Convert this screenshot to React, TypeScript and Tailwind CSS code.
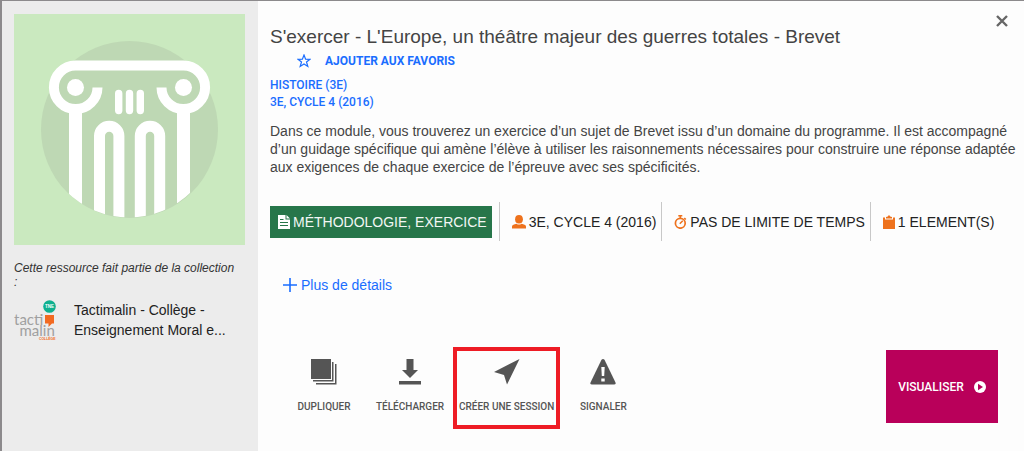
import type { ReactNode } from "react";

function PillarArt() {
  return (
    <svg viewBox="0 0 231 231" className="block w-full" role="img" aria-label="Histoire">
      <defs>
        <clipPath id="pillar-clip">
          <path d="M0 0H231V115H203.500A88.500 88.500 0 0 1 26.500 115H0Z" />
        </clipPath>
      </defs>
      <rect width="231" height="231" fill="#cae9bf" />
      <circle cx="115.500" cy="115.500" r="88.500" fill="#bed8b4" />
      <g clipPath="url(#pillar-clip)">
        <path d="M61.500 51.500H169.500A21.500 21.500 0 0 1 169.500 94.500H61.500A21.500 21.500 0 0 1 61.500 51.500Z" fill="#bed8b4" />
        <g fill="none" stroke="#fff">
          <path d="M83.500 73.500A21.800 21.800 0 1 1 61.500 51.500H169.500A21.800 21.800 0 1 1 147.500 73.500" strokeWidth="10" />
          <path d="M61.500 97V231M169.500 97V231" strokeWidth="13" />
          <path d="M85.500 231V122a9.700 9.700 0 0 1 19.400 0V231M126.300 231V122a9.700 9.700 0 0 1 19.400 0V231" strokeWidth="11" />
          <path d="M104.700 79.500V96.500M115.500 79.500V96.500M126.300 79.500V96.500" strokeWidth="7.400" strokeLinecap="round" />
        </g>
        <circle cx="61.500" cy="73.500" r="8.500" fill="#fff" />
        <circle cx="169.500" cy="73.500" r="8.500" fill="#fff" />
      </g>
    </svg>
  );
}

function CollectionLogo() {
  return (
    <svg viewBox="0 0 42 42" className="size-[42px] shrink-0" role="img" aria-label="Tactimalin Collège">
      <circle cx="35.500" cy="6.500" r="6.300" fill="#0eb08f" />
      <text x="35.500" y="8.200" textAnchor="middle" fontSize="4.500" fontWeight="700" fill="#fff" fontFamily="Liberation Sans, sans-serif">TNE</text>
      <g fill="#a0a0a0" fontFamily="Lato, sans-serif" fontSize="15" fontWeight="400">
        <text x="0" y="25">tacti</text>
        <text x="5.500" y="35.500">malin</text>
      </g>
      <path d="M31 15H40V23.500H38L34.500 27V23.500H31Z" fill="#f26a21" />
      <text x="25" y="39.500" fontSize="3.400" fontWeight="700" fill="#f26a21" fontFamily="Liberation Sans, sans-serif">COLLÈGE</text>
    </svg>
  );
}

function Fact({ icon, children }: { icon: ReactNode; children: ReactNode }) {
  return (
    <li className="flex h-[39px] items-center gap-[3px] border-l border-[#c8c8c8] pr-[5px] pl-3 text-[#222]">
      {icon}
      <span>{children}</span>
    </li>
  );
}

function Action({ icon, label, highlighted = false }: { icon: ReactNode; label: string; highlighted?: boolean }) {
  return (
    <button
      type="button"
      className={
        "flex h-[82px] min-w-[86px] flex-col items-center justify-start gap-4 border-[4px] px-[2px] pt-2 font-[Roboto,sans-serif] text-[10px] leading-3 font-medium whitespace-nowrap text-[#555] " +
        (highlighted ? "border-[#ee1c25]" : "border-transparent")
      }
    >
      {icon}
      {label}
    </button>
  );
}

export default function App() {
  return (
    <div className="flex min-h-screen border-t border-l-2 border-[#8c8a8c] bg-[#fdfdfd] font-['Liberation_Sans',Arial,sans-serif]">
      <aside className="w-64 shrink-0 bg-[#ececec] pt-[13px] pr-[13px] pl-3">
        <PillarArt />
        <p className="mt-4 pr-2 text-[12px] leading-[14px] text-[#333] italic">Cette ressource fait partie de la collection :</p>
        <a href="#collection" className="mt-[11px] flex items-start gap-[18px] text-[14px] leading-5 text-[#222]">
          <CollectionLogo />
          <span>Tactimalin - Collège - Enseignement Moral e...</span>
        </a>
      </aside>

      <main className="relative min-w-0 flex-1 pt-6 pr-1 pl-3">
        <button type="button" aria-label="Fermer" className="absolute top-[14px] right-4 text-[#666]">
          <svg viewBox="0 0 12 12" className="size-3" fill="none" stroke="currentColor" strokeWidth="2.400">
            <path d="M1 1L11 11M11 1L1 11" />
          </svg>
        </button>

        <h1 className="text-[19px] leading-6 text-[#444]">S'exercer - L'Europe, un théâtre majeur des guerres totales - Brevet</h1>
        <button type="button" className="ml-[27px] flex h-6 items-center gap-[14px] font-[Roboto,sans-serif] text-[12px] font-bold text-[#1a6dff]">
          <svg viewBox="0 0 14 14" className="size-[14px]" fill="none" stroke="currentColor" strokeWidth="1.200">
            <path d="M7 1L8.600 5.100L13 5.300L9.500 8L10.800 12.400L7 9.900L3.200 12.400L4.500 8L1 5.300L5.400 5.100Z" />
          </svg>
          AJOUTER AUX FAVORIS
        </button>
        <div className="mt-1 flex flex-col items-start font-[Roboto,sans-serif] text-[12px] leading-[17px] font-medium text-[#1a6dff]">
          <a href="#histoire">HISTOIRE (3E)</a>
          <a href="#cycle-4">3E, CYCLE 4 (2016)</a>
        </div>
        <p className="mt-[11px] text-[14px] leading-[18px] text-[#444]">
          Dans ce module, vous trouverez un exercice d’un sujet de Brevet issu d’un domaine du programme. Il est accompagné d’un guidage spécifique qui amène l’élève à utiliser les raisonnements nécessaires pour construire une réponse adaptée aux exigences de chaque exercice de l’épreuve avec ses spécificités.
        </p>

        <ul className="mt-[26px] flex items-center text-[14px] leading-5 whitespace-nowrap">
          <li className="mr-[7px] flex h-8 items-center gap-[3px] bg-[#27764a] pr-[5px] pl-2 text-[#f2f7f4]">
            <svg viewBox="0 0 12 14" className="h-[14px] w-3">
              <path d="M0 0H7.500V4.500H12V14H0ZM8.500 0L12 3.500H8.500Z" fill="#fff" />
              <path d="M2 4.500H5.500M2 7.500H10M2 10.500H10" stroke="#27764a" />
            </svg>
            <span>MÉTHODOLOGIE, EXERCICE</span>
          </li>
          <Fact
            icon={
              <svg viewBox="0 0 14 14" className="size-[14px]" fill="#ee721d">
                <ellipse cx="7" cy="4.300" rx="3.900" ry="4.300" />
                <path d="M0 13.500V11.500Q0 10 2 9.500L4.500 8.700Q7 10.500 9.500 8.700L12 9.500Q14 10 14 11.500V13.500Z" />
              </svg>
            }
          >
            3E, CYCLE 4 (2016)
          </Fact>
          <Fact
            icon={
              <svg viewBox="0 0 13 14" className="h-[14px] w-[13px]" fill="none" stroke="#ee721d">
                <circle cx="6.300" cy="8.300" r="4.900" strokeWidth="1.700" />
                <path d="M4.300 .8H8.300M6.300 1V3M10.300 3L11.800 4.500" strokeWidth="1.600" />
                <path d="M5.800 8.800L8.800 5.800" strokeWidth="1.500" />
              </svg>
            }
          >
            PAS DE LIMITE DE TEMPS
          </Fact>
          <Fact
            icon={
              <svg viewBox="0 0 12 14" className="h-[14px] w-3" fill="#ee721d">
                <path d="M0 2.500H2V4.500H10V2.500H12V14H0ZM3 3.500V2L4.800 1.500Q6-.8 7.200 1.500L9 2V3.500Z" />
              </svg>
            }
          >
            1 ELEMENT(S)
          </Fact>
        </ul>

        <button type="button" className="mt-[34px] ml-[13px] flex h-5 items-center gap-1 text-[14px] text-[#1a6dff]">
          <svg viewBox="0 0 14 14" className="size-[14px]" stroke="currentColor" strokeWidth="1.600">
            <path d="M7 0V14M0 7H14" />
          </svg>
          Plus de détails
        </button>

        <div className="mt-[52px] flex items-start justify-between pr-[22px]">
          <div className="ml-[11px] flex">
            <Action
              label="DUPLIQUER"
              icon={
                <svg viewBox="0 0 26 26" className="size-[26px]" fill="#555">
                  <path d="M0 0H20V20H0ZM21 3H22.500V22.500H2V21H21ZM24 5H25.500V25.500H5V24H24Z" />
                </svg>
              }
            />
            <Action
              label="TÉLÉCHARGER"
              icon={
                <svg viewBox="0 0 26 26" className="size-[26px]" fill="#555">
                  <path d="M9.500 0H16.500V11H21L13 19L5 11H9.500ZM2 22H24V25.500H2Z" />
                </svg>
              }
            />
            <Action
              highlighted
              label="CRÉER UNE SESSION"
              icon={
                <svg viewBox="0 0 26 26" className="size-[26px]" fill="#555">
                  <path d="M25.500 0L13 25.500L10 16L0 13Z" />
                </svg>
              }
            />
            <Action
              label="SIGNALER"
              icon={
                <svg viewBox="0 0 26 26" className="size-[26px]">
                  <path d="M11.500 .8Q13-.8 14.500 .8L25.500 23.500Q26 25.500 24 25.500H2Q0 25.500 .5 23.500Z" fill="#555" />
                  <path d="M11.300 8H14.700L14.200 17H11.800ZM11.300 19.500H14.700V22.500H11.300Z" fill="#fff" />
                </svg>
              }
            />
          </div>
          <button type="button" className="mt-[3px] flex h-[73px] w-28 items-center justify-center gap-[10px] bg-[#b9005a] font-[Roboto,sans-serif] text-[12px] font-medium text-white">
            VISUALISER
            <svg viewBox="0 0 12 12" className="size-3">
              <circle cx="6" cy="6" r="6" fill="#fff" />
              <path d="M4 2.800L9 6L4 9.200Z" fill="#b9005a" />
            </svg>
          </button>
        </div>
      </main>
    </div>
  );
}
